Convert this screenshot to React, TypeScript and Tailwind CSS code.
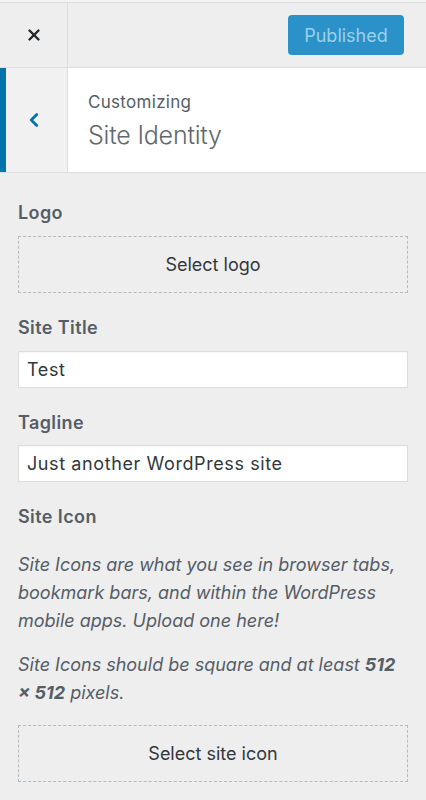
import { X, ChevronLeft } from 'lucide-react';

const FONT = '"Inter", "Liberation Sans", "Noto Sans", sans-serif';

/**
 * Customizer top bar: close button and publish state
 */
function TopBar() {
  return (
    <div className="bg-[#f3f3f3]">
      <div className="h-[3px] border-b border-[#dcdcdc]" />
      <div className="flex h-[65px] items-center border-b border-[#dddddd] bg-[#eeeeee]">
        <button
          type="button"
          className="flex h-full w-[68px] items-center justify-center border-r border-[#dddddd] text-[#23282d]"
        >
          <X className="h-[18px] w-[18px]" strokeWidth={3.2} />
        </button>
        <div className="flex flex-1 justify-end pr-[22px]">
          <button
            type="button"
            className="h-[40px] w-[116px] rounded-[4px] bg-[#2a92c9] text-[18px] text-[#9ad0ec]"
          >
            Published
          </button>
        </div>
      </div>
    </div>
  );
}

/**
 * Section header with back button
 */
function SectionHeader() {
  return (
    <div className="flex h-[105px] border-b border-[#dddddd] bg-white">
      <div className="flex w-[68px] border-r border-[#dddddd] bg-[#f1f1f1]">
        <div className="w-[6px] bg-[#0073aa]" />
        <div className="flex flex-1 items-center justify-center pr-[6px] text-[#0073aa]">
          <ChevronLeft className="h-[22px] w-[22px]" strokeWidth={3} />
        </div>
      </div>
      <div className="flex flex-col justify-center pl-[20px] pt-[2px] text-[#555d66]">
        <span className="text-[17px] leading-[22px] tracking-[0.3px]">Customizing</span>
        <span className="mt-[6px] text-[25px] font-light leading-[32px] tracking-[-0.2px] text-[#60676e]">
          Site Identity
        </span>
      </div>
    </div>
  );
}

function Label({ children }: { children: React.ReactNode }) {
  return (
    <div className="text-[18px] font-semibold leading-[24px] tracking-[0.4px] text-[#555d66]">
      {children}
    </div>
  );
}

function DashedButton({ children }: { children: React.ReactNode }) {
  return (
    <div className="flex h-[57px] items-center justify-center border border-dashed border-[#b4b9be] text-[18px] text-[#32373c]">
      {children}
    </div>
  );
}

function TextInput({ value }: { value: string }) {
  return (
    <div className="flex h-[37px] items-center border border-[#dddddd] bg-white px-[8px] text-[18px] tracking-[0.6px] text-[#32373c] shadow-[inset_0_1px_2px_rgba(0,0,0,0.04)]">
      {value}
    </div>
  );
}

export default function App() {
  return (
    <div
      className="min-h-[800px] w-[426px] overflow-hidden bg-[#eeeeee]"
      style={{ fontFamily: FONT }}
    >
      <TopBar />
      <SectionHeader />

      <div className="px-[18px] pt-[28px]">
        {/* Logo */}
        <Label>Logo</Label>
        <div className="mt-[11px]">
          <DashedButton>Select logo</DashedButton>
        </div>

        {/* Site title */}
        <div className="mt-[23px]">
          <Label>Site Title</Label>
        </div>
        <div className="mt-[11px]">
          <TextInput value="Test" />
        </div>

        {/* Tagline */}
        <div className="mt-[23px]">
          <Label>Tagline</Label>
        </div>
        <div className="mt-[10px]">
          <TextInput value="Just another WordPress site" />
        </div>

        {/* Site icon */}
        <div className="mt-[23px]">
          <Label>Site Icon</Label>
        </div>
        <p className="mt-[22px] text-[18px] italic leading-[28px] text-[#555d66]">
          Site Icons are what you see in browser tabs, bookmark bars, and within the
          WordPress mobile apps. Upload one here!
        </p>
        <p className="mt-[16px] text-[18px] italic leading-[28px] text-[#555d66]">
          Site Icons should be square and at least <strong>512</strong>{' '}
          <strong>× 512</strong> pixels.
        </p>
        <div className="mt-[18px]">
          <DashedButton>Select site icon</DashedButton>
        </div>
      </div>
    </div>
  );
}
